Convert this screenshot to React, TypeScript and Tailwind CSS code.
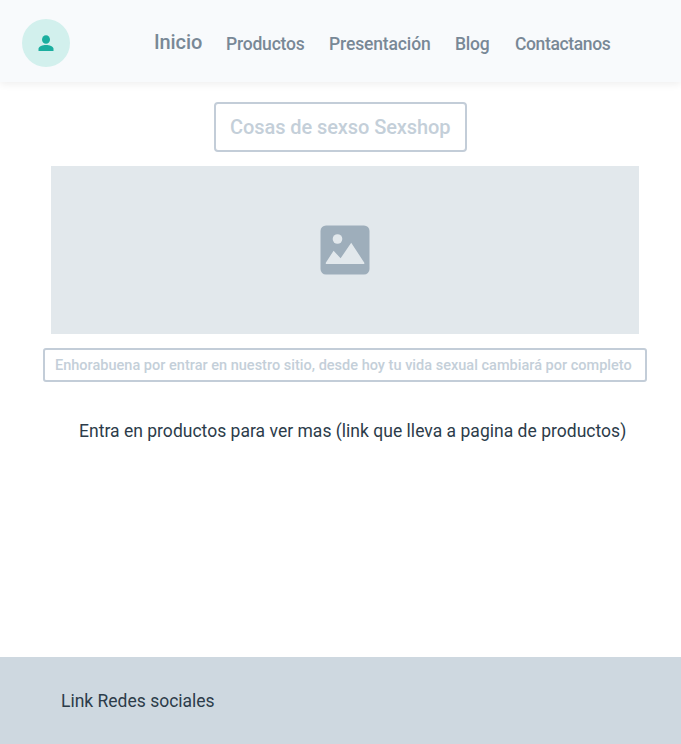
const links = [
  { label: "Productos", cls: "ml-[24px] w-[79px] tracking-[-0.2px]" },
  { label: "Presentación", cls: "ml-[24px] w-[102px] tracking-[-0.14px]" },
  { label: "Blog", cls: "ml-[24px] w-[36px] tracking-[-0.2px]" },
  { label: "Contactanos", cls: "ml-[24px] w-[98px] tracking-[-0.37px]" },
];

function UserIcon() {
  return (
    <svg viewBox="0 0 24 24" className="h-[24px] w-[24px] fill-[#1bae9f]">
      <ellipse cx="12" cy="8.5" rx="4" ry="4.3" />
      <path d="M4.5 20v-2.2c0-2.7 4.2-3.9 7.5-3.9s7.5 1.2 7.5 3.9v2.2z" />
    </svg>
  );
}

function ImageIcon() {
  return (
    <svg viewBox="0 0 50 50" className="h-[50px] w-[50px]">
      <rect x="0.5" y="0.5" width="49" height="49" rx="5.5" fill="#9eaebb" />
      <circle cx="17.5" cy="14" r="4.8" fill="#e2e8ec" />
      <path d="M5.8 39v-1.3L13.6 25.7l7 7.6L31.2 17.7 44.3 37.7V39z" fill="#e2e8ec" />
    </svg>
  );
}

export default function App() {
  return (
    <div className="flex h-[744px] w-[681px] flex-col overflow-hidden bg-white font-['Roboto','Liberation_Sans',sans-serif] font-medium whitespace-nowrap">
      <header className="flex h-[82px] shrink-0 items-start bg-[#f8fafc] pl-[22px] shadow-[0_2px_8px_rgba(0,0,0,0.07)]">
        <div className="mt-[19px] flex h-12 w-12 items-center justify-center rounded-full bg-[#d2f0ed]">
          <UserIcon />
        </div>
        <nav className="ml-[84px] flex pt-[30px] text-[#788896]">
          <a className="w-[48px] text-[20px] leading-6 tracking-[-0.1px]">Inicio</a>
          {links.map((l) => (
            <a key={l.label} className={`pt-[2px] text-[17.5px] leading-6 ${l.cls}`}>
              {l.label}
            </a>
          ))}
        </nav>
      </header>
      <main className="flex grow flex-col items-start text-[#c4cfd9]">
        <h1 className="mt-[20px] ml-[214px] flex h-[50px] w-[253px] items-center rounded-[4px] border-2 border-[#c3cdd8] pl-[14px] text-[20px] tracking-[-0.08px]">
          Cosas de sexso Sexshop
        </h1>
        <div className="mt-[14px] ml-[51px] flex h-[168px] w-[588px] items-center justify-center bg-[#e2e8ec]">
          <ImageIcon />
        </div>
        <p className="mt-[14px] ml-[43px] flex h-[34px] w-[604px] items-center rounded-[3px] border-2 border-[#c3cdd8] pt-[1px] pl-[10px] text-[14.5px] tracking-[0.014px]">
          Enhorabuena por entrar en nuestro sitio, desde hoy tu vida sexual cambiará por completo
        </p>
        <a className="mt-[37px] ml-[79px] text-[17.5px] leading-6 font-normal tracking-[0.02px] text-[#2c3c4a]">
          Entra en productos para ver mas (link que lleva a pagina de productos)
        </a>
      </main>
      <footer className="h-[87px] shrink-0 bg-[#ced8e0] pt-[32px] pl-[61px] text-[17.5px] leading-6 font-normal text-[#2c3c4a]">
        Link Redes sociales
      </footer>
    </div>
  );
}
